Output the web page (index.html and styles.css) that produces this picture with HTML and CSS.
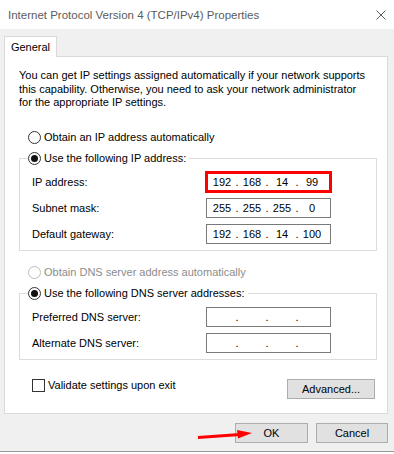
FILE: index.html
```html
<!DOCTYPE html>
<html lang="en">
<head>
    <meta charset="UTF-8">
    <title>Internet Protocol Version 4 (TCP/IPv4) Properties</title>
    <link rel="stylesheet" href="styles.css">
</head>
<body>
    <div class="window">
        <div class="titlebar">
            <span class="title">Internet Protocol Version 4 (TCP/IPv4) Properties</span>
            <svg class="close" viewBox="0 0 10 10">
                <path d="M0.5 0.5 L9.5 9.5 M9.5 0.5 L0.5 9.5" stroke="#5a5a5a" stroke-width="1" fill="none"/>
            </svg>
        </div>

        <div class="client">
            <div class="tab">General</div>

            <div class="panel">
                <p class="intro">You can get IP settings assigned automatically if your network supports<br>
                this capability. Otherwise, you need to ask your network administrator<br>
                for the appropriate IP settings.</p>

                <div class="option option-first"><span class="radio"></span>Obtain an IP address automatically</div>

                <fieldset class="group">
                    <legend class="option-legend"><span class="radio on"></span>Use the following IP address:</legend>
                    <div class="row">
                        <span>IP address:</span>
                        <div class="ip-box marked">
                            <span class="seg">192</span><span class="dot">.</span><span class="seg">168</span><span class="dot">.</span><span class="seg">14</span><span class="dot">.</span><span class="seg">99</span>
                        </div>
                    </div>
                    <div class="row">
                        <span>Subnet mask:</span>
                        <div class="ip-box">
                            <span class="seg">255</span><span class="dot">.</span><span class="seg">255</span><span class="dot">.</span><span class="seg">255</span><span class="dot">.</span><span class="seg">0</span>
                        </div>
                    </div>
                    <div class="row">
                        <span>Default gateway:</span>
                        <div class="ip-box">
                            <span class="seg">192</span><span class="dot">.</span><span class="seg">168</span><span class="dot">.</span><span class="seg">14</span><span class="dot">.</span><span class="seg">100</span>
                        </div>
                    </div>
                </fieldset>

                <div class="option option-dns disabled"><span class="radio"></span>Obtain DNS server address automatically</div>

                <fieldset class="group">
                    <legend class="option-legend"><span class="radio on"></span>Use the following DNS server addresses:</legend>
                    <div class="row">
                        <span>Preferred DNS server:</span>
                        <div class="ip-box">
                            <span class="seg"></span><span class="dot">.</span><span class="seg"></span><span class="dot">.</span><span class="seg"></span><span class="dot">.</span><span class="seg"></span>
                        </div>
                    </div>
                    <div class="row">
                        <span>Alternate DNS server:</span>
                        <div class="ip-box">
                            <span class="seg"></span><span class="dot">.</span><span class="seg"></span><span class="dot">.</span><span class="seg"></span><span class="dot">.</span><span class="seg"></span>
                        </div>
                    </div>
                </fieldset>

                <div class="bottom-row">
                    <div class="check-option"><span class="checkbox"></span>Validate settings upon exit</div>
                    <button class="btn btn-advanced">Advanced...</button>
                </div>
            </div>

            <div class="footer">
                <button class="btn btn-ok">OK</button>
                <button class="btn btn-cancel">Cancel</button>
            </div>
        </div>

        <!-- annotation arrow pointing at OK -->
        <svg class="arrow" viewBox="0 0 58 14">
            <path d="M2 10.5 L44 7.5" stroke="#f00" stroke-width="3" fill="none"/>
            <polygon points="41,3 56,6 42,11.5" fill="#f00"/>
        </svg>
    </div>
</body>
</html>
```

FILE: styles.css
```css
* {
    box-sizing: border-box;
}

html {
    background: #fff;
}

body {
    margin: 0;
    font-family: "Liberation Sans", Arial, sans-serif;
    font-size: 11px;
    color: #000;
}

.window {
    position: relative;
    width: 394px;
    height: 452px;
    background: #f0f0f0;
    border-bottom: 1px solid #9a9a9a;
    display: flex;
    flex-direction: column;
}

.titlebar {
    height: 29px;
    background: #fff;
    display: flex;
    align-items: center;
    justify-content: space-between;
    padding: 0 8px;
}

.title {
    font-size: 11.5px;
    color: #5c5c5c;
}

.close {
    width: 10px;
    height: 10px;
}

.client {
    flex: 1;
    padding: 7px 6px 8px 4px;
    display: flex;
    flex-direction: column;
}

.tab {
    position: relative;
    z-index: 1;
    width: 53px;
    height: 21px;
    margin-bottom: -1px;
    border: 1px solid #d9d9d9;
    border-bottom: none;
    background: #fff;
    display: flex;
    align-items: center;
    justify-content: center;
}

.panel {
    height: 358px;
    border: 1px solid #d9d9d9;
    background: #fff;
    padding: 12px 10px 0 14px;
}

.intro {
    margin: 0;
    line-height: 13.5px;
}

.option {
    display: flex;
    align-items: center;
    gap: 3px;
    height: 16px;
    margin-left: 9px;
}

.option-first {
    margin-top: 19.5px;
}

.option-dns {
    margin-top: 13px;
}

.disabled {
    color: #8c8c8c;
}

.disabled .radio {
    border-color: #bcbcbc;
}

.radio {
    flex: none;
    width: 13px;
    height: 13px;
    border: 1px solid #333;
    border-radius: 50%;
    background: #fff;
    display: grid;
    place-items: center;
}

.radio.on::after {
    content: "";
    width: 7px;
    height: 7px;
    border-radius: 50%;
    background: #111;
}

.group {
    margin: 5px 0 0;
    min-width: 0;
    border: 1px solid #dcdcdc;
    padding: 6px 0 6px 8px;
}

.option-legend {
    display: flex;
    align-items: center;
    gap: 3px;
    height: 16px;
    padding: 0 3px 0 0;
}

.row {
    display: grid;
    grid-template-columns: 174px 125px;
    align-items: center;
    padding-left: 4px;
}

.row + .row {
    margin-top: 6px;
}

.ip-box {
    height: 20px;
    border: 1px solid #7a7a7a;
    background: #fff;
    display: flex;
    align-items: center;
    padding-left: 4px;
}

.ip-box.marked {
    outline: 3px solid #f00;
    outline-offset: -2px;
}

.seg {
    width: 22px;
    text-align: center;
}

.dot {
    width: 8px;
    text-align: center;
}

.bottom-row {
    margin-top: 17px;
    display: flex;
    justify-content: space-between;
    align-items: flex-start;
}

.check-option {
    display: flex;
    align-items: center;
    gap: 3px;
    height: 16px;
    margin-left: 13px;
}

.checkbox {
    width: 13px;
    height: 13px;
    border: 1px solid #333;
    background: #fff;
}

.btn {
    height: 20px;
    padding: 0;
    border: 1px solid #adadad;
    background: #e1e1e1;
    font-family: inherit;
    font-size: 11px;
    color: #000;
}

.btn-advanced {
    width: 88px;
    margin-top: 2px;
    margin-right: 2px;
}

.footer {
    margin-top: 9px;
    display: flex;
    justify-content: flex-end;
    gap: 8px;
}

.btn-ok {
    width: 73px;
}

.btn-cancel {
    width: 72px;
}

.arrow {
    position: absolute;
    left: 196px;
    top: 427px;
    width: 58px;
    height: 14px;
}
```
